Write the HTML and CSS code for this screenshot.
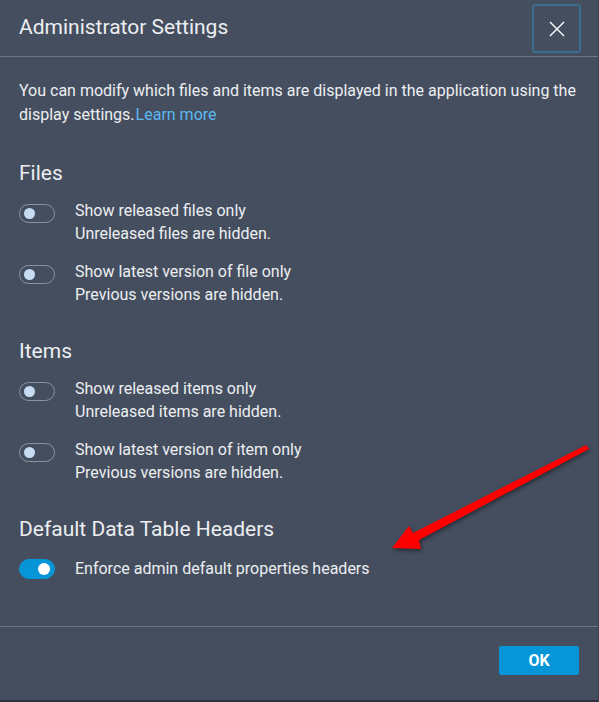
FILE: index.html
```html
<!DOCTYPE html>
<html lang="en">
<head>
    <meta charset="UTF-8">
    <meta name="viewport" content="width=device-width, initial-scale=1.0">
    <title>Administrator Settings</title>
    <link rel="stylesheet" href="styles.css">
</head>
<body>
    <div class="dialog">
        <div class="dialog-header">
            <h1 class="dialog-title">Administrator Settings</h1>
            <button class="close-btn" type="button" aria-label="Close">
                <svg width="16" height="16" viewBox="0 0 16 16">
                    <path d="M1 1 L15 15 M15 1 L1 15" stroke="#ffffff" stroke-width="1.4" fill="none"/>
                </svg>
            </button>
        </div>

        <div class="dialog-body">
            <p class="intro">You can modify which files and items are displayed in the application using the display settings.<a href="#" class="link">Learn more</a></p>

            <h2 class="section-title">Files</h2>
            <div class="setting">
                <span class="toggle"></span>
                <div class="setting-text">
                    <div>Show released files only</div>
                    <div>Unreleased files are hidden.</div>
                </div>
            </div>
            <div class="setting">
                <span class="toggle"></span>
                <div class="setting-text">
                    <div>Show latest version of file only</div>
                    <div>Previous versions are hidden.</div>
                </div>
            </div>

            <h2 class="section-title">Items</h2>
            <div class="setting">
                <span class="toggle"></span>
                <div class="setting-text">
                    <div>Show released items only</div>
                    <div>Unreleased items are hidden.</div>
                </div>
            </div>
            <div class="setting">
                <span class="toggle"></span>
                <div class="setting-text">
                    <div>Show latest version of item only</div>
                    <div>Previous versions are hidden.</div>
                </div>
            </div>

            <h2 class="section-title">Default Data Table Headers</h2>
            <div class="setting single">
                <span class="toggle on"></span>
                <div class="setting-text">
                    <div>Enforce admin default properties headers</div>
                </div>
            </div>
        </div>

        <div class="dialog-footer">
            <button class="ok-btn" type="button">OK</button>
        </div>

        <!-- annotation arrow -->
        <svg class="arrow" width="599" height="702" viewBox="0 0 599 702">
            <polygon points="392,548 409,526 413,533 586,445 589,449 419,540 421,549" fill="#ff0000"/>
        </svg>
    </div>
</body>
</html>
```

FILE: styles.css
```css
body {
    margin: 0;
    background: #454e5f;
    font-family: Roboto, "Open Sans", sans-serif;
    color: #eceef1;
}
.dialog {
    position: relative;
    width: 599px;
    height: 702px;
    box-sizing: border-box;
    background: #454e5f;
    border-bottom: 2px solid #2b303a;
    border-right: 1px solid #3a4150;
    display: flex;
    flex-direction: column;
}
.dialog-header {
    height: 57px;
    box-sizing: border-box;
    border-bottom: 1px solid #6b7585;
    display: flex;
    justify-content: space-between;
    align-items: flex-start;
    padding: 0 17px 0 19px;
}
.dialog-title {
    margin: 13px 0 0;
    font-size: 21px;
    font-weight: 400;
    line-height: 28px;
}
.close-btn {
    margin-top: 4px;
    width: 49px;
    height: 49px;
    background: transparent;
    border: 2px solid #3b6d8d;
    border-radius: 3px;
    display: flex;
    align-items: center;
    justify-content: center;
    padding: 0;
}
.dialog-body {
    flex: 1;
    padding: 22px 19px 0;
}
.intro {
    margin: 0;
    font-size: 16px;
    line-height: 24px;
}
.link {
    margin-left: 1px;
    color: #5bb8f0;
    text-decoration: none;
}
.section-title {
    margin: 32px 0 12px;
    font-size: 21px;
    font-weight: 400;
    line-height: 28px;
}
.setting {
    display: flex;
    gap: 20px;
    margin-bottom: 15px;
    font-size: 16px;
    line-height: 23px;
}
.setting + .section-title {
    margin-top: 31px;
}
.setting.single {
    margin-top: 14px;
}
.toggle {
    position: relative;
    flex: none;
    width: 36px;
    height: 19px;
    box-sizing: border-box;
    margin-top: 5px;
    border: 1px solid #8a93a2;
    border-radius: 10px;
}
.toggle::after {
    content: "";
    position: absolute;
    left: 4px;
    top: 3px;
    width: 11px;
    height: 11px;
    border-radius: 50%;
    background: #c6dcf3;
}
.toggle.on {
    background: #0696d7;
    border-color: #0696d7;
    height: 20px;
    margin-top: 2px;
}
.toggle.on::after {
    left: auto;
    right: 4px;
    top: 3px;
    width: 12px;
    height: 12px;
    background: #ffffff;
}
.dialog-footer {
    height: 74px;
    box-sizing: border-box;
    border-top: 1px solid #6b7585;
    display: flex;
    justify-content: flex-end;
    align-items: flex-start;
    padding: 19px 19px 0;
}
.ok-btn {
    width: 80px;
    height: 29px;
    background: #0696d7;
    border: none;
    border-radius: 2px;
    color: #ffffff;
    font-family: Roboto, sans-serif;
    font-size: 16px;
    font-weight: 700;
}
.arrow {
    position: absolute;
    left: 0;
    top: 0;
    pointer-events: none;
    filter: drop-shadow(1px 2px 2px rgba(0, 0, 0, 0.45));
}
```
